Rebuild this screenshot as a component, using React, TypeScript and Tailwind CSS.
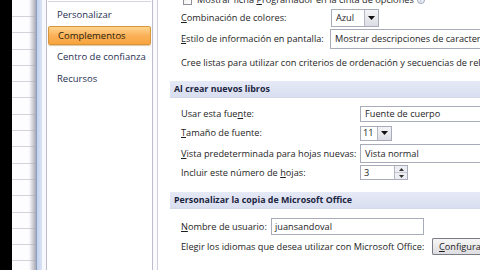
import React from 'react';

const font = "font-['Segoe_UI','Open_Sans','Noto_Sans',sans-serif]";

const U = ({ children }: { children: React.ReactNode }) => (
  <span className="underline underline-offset-[1px] decoration-[0.5px]">{children}</span>
);

const Arrow = () => (
  <svg width="7" height="4" viewBox="0 0 7 4">
    <path d="M0 0h7L3.5 4z" fill="#111" />
  </svg>
);

const DropBtn = () => (
  <div className="flex w-[14px] h-full items-center justify-center border-l border-[#b4b8c4] bg-gradient-to-b from-[#f4f4f8] to-[#dcdde4]">
    <Arrow />
  </div>
);

const Label = ({ children, w }: { children: React.ReactNode; w: string }) => (
  <div className={`${w} shrink-0 whitespace-nowrap`}>{children}</div>
);

const Header = ({ children, mt }: { children: React.ReactNode; mt: string }) => (
  <div
    className={`${mt} ml-[12px] flex h-[17px] shrink-0 items-center border-b border-[#d4d9ea] bg-gradient-to-b from-[#e6e9f6] to-[#d9dff0] pl-[4px] text-[8.9px] font-bold text-[#1b2540]`}
  >
    {children}
  </div>
);

export default function App() {
  const gridRows = Array.from({ length: 18 });
  return (
    <div className={`${font} flex h-[270px] w-[480px] overflow-hidden bg-white text-[9.2px] leading-none text-[#1e1e1e]`}>
      {/* black edge */}
      <div className="w-[12px] shrink-0 bg-black" />

      {/* sheet behind */}
      <div className="relative w-[24px] shrink-0 bg-[#fdfcff]">
        <div className="flex flex-col pt-[0.7px]">
          {gridRows.map((_, i) => (
            <div key={i} className="h-[16.3px] shrink-0 border-b border-[#d3d3dc]" />
          ))}
        </div>
        <div className="absolute inset-y-0 right-0 w-[7px] bg-gradient-to-r from-transparent to-[#a9a9b4]" />
      </div>

      {/* window frame */}
      <div className="w-[6px] shrink-0 border-l border-[#8d9fc4] bg-gradient-to-r from-[#c3d1ec] to-[#d9e3f5]" />
      <div className="w-[4px] shrink-0 bg-[#f7f8fc]" />

      {/* nav */}
      <div className="w-[107px] shrink-0 border-x border-[#bdbccc] bg-white text-[9.5px]">
        <div className="mx-[1px] h-[1px] mt-[1px] bg-[#d6d6e0]" />
        <div className="flex flex-col pt-[2px] text-[#1f2f52]">
          <div className="flex h-[22px] items-center pl-[10px]">Personalizar</div>
          <div className="mx-[1px] flex h-[19px] items-center rounded-[2px] border border-[#d8963a] bg-gradient-to-b from-[#ffd58e] via-[#fbb15a] to-[#f7a43c] pl-[9px] text-[#2a1a05] shadow-[0_1px_1px_rgba(180,110,30,0.4)]">
            Complementos
          </div>
          <div className="flex h-[23px] items-center pl-[10px]">Centro de confianza</div>
          <div className="flex h-[22px] items-center pl-[10px]">Recursos</div>
        </div>
      </div>

      <div className="w-[4px] shrink-0 bg-[#fbfbfd]" />

      {/* content */}
      <div className="flex min-w-0 flex-1 flex-col border-l border-[#cfcfdb] bg-white">
        <div className="-mt-[8px] flex h-[16px] shrink-0 items-center pl-[25px]">
          <div className="h-[9px] w-[9px] shrink-0 border border-[#8e8f99] bg-gradient-to-br from-[#eeeeee] to-white" />
          <div className="ml-[5px] whitespace-nowrap">
            Mostrar ficha <U>P</U>rogramador en la cinta de opciones
          </div>
          <div className="ml-[3px] flex h-[8px] w-[8px] items-center justify-center rounded-full border border-[#9aa3b8] bg-[#eef1f8] text-[6px] text-[#5b6b8c]">
            ?
          </div>
        </div>

        <div className="flex h-[19px] shrink-0 items-center pl-[23px]">
          <Label w="w-[150px]">
            <U>C</U>ombinación de colores:
          </Label>
          <div className="flex h-[18px] w-[48px] items-stretch border border-[#a8acb8] bg-white">
            <div className="flex flex-1 items-center pl-[4px]">Azul</div>
            <DropBtn />
          </div>
        </div>

        <div className="mt-[2px] flex h-[20px] shrink-0 items-center pl-[23px]">
          <Label w="w-[149px]">
            <U>E</U>stilo de información en pantalla:
          </Label>
          <div className="flex h-[20px] flex-1 items-center whitespace-nowrap border border-r-0 border-[#a8acb8] pl-[4px]">
            Mostrar descripciones de características
          </div>
        </div>

        <div className="mt-[4px] flex h-[20px] shrink-0 items-center whitespace-nowrap pl-[23px]">
          Cree listas para utilizar con criterios de ordenación y secuencias de relleno:
        </div>

        <Header mt="mt-[8px]">Al crear nuevos libros</Header>

        <div className="mt-[7px] flex h-[17px] shrink-0 items-center pl-[23px]">
          <Label w="w-[179px]">
            Usar esta fue<U>n</U>te:
          </Label>
          <div className="flex h-[16px] flex-1 items-center whitespace-nowrap border border-r-0 border-[#a8acb8] pl-[4px]">
            Fuente de cuerpo
          </div>
        </div>

        <div className="mt-[2px] flex h-[18px] shrink-0 items-center pl-[23px]">
          <Label w="w-[179px]">
            <U>T</U>amaño de fuente:
          </Label>
          <div className="flex h-[15px] w-[32px] items-stretch border border-[#a8acb8]">
            <div className="flex flex-1 items-center pl-[2px]">11</div>
            <DropBtn />
          </div>
        </div>

        <div className="mt-[2px] flex h-[19px] shrink-0 items-center pl-[23px]">
          <Label w="w-[179px]">
            <U>V</U>ista predeterminada para hojas nuevas:
          </Label>
          <div className="flex h-[19px] flex-1 items-center whitespace-nowrap border border-r-0 border-[#a8acb8] pl-[4px]">
            Vista normal
          </div>
        </div>

        <div className="mt-[2px] flex h-[15px] shrink-0 items-center pl-[23px]">
          <Label w="w-[179px]">
            Incluir este número de <U>h</U>ojas:
          </Label>
          <div className="flex h-[15px] w-[48px] items-stretch border border-[#a8acb8]">
            <div className="flex flex-1 items-center pl-[3px]">3</div>
            <div className="flex w-[13px] flex-col border-l border-[#b4b8c4] bg-[#eceef3]">
              <div className="flex flex-1 items-center justify-center border-b border-[#c4c8d2]">
                <svg width="5" height="3" viewBox="0 0 5 3">
                  <path d="M0 3h5L2.5 0z" fill="#333" />
                </svg>
              </div>
              <div className="flex flex-1 items-center justify-center">
                <svg width="5" height="3" viewBox="0 0 5 3">
                  <path d="M0 0h5L2.5 3z" fill="#333" />
                </svg>
              </div>
            </div>
          </div>
        </div>

        <Header mt="mt-[12px]">Personalizar la copia de Microsoft Office</Header>

        <div className="mt-[9px] flex h-[17px] shrink-0 items-center pl-[23px]">
          <Label w="w-[90px]">
            <U>N</U>ombre de usuario:
          </Label>
          <div className="flex h-[17px] w-[153px] items-center border border-[#a8acb8] pl-[3px]">juansandoval</div>
        </div>

        <div className="mt-[3px] flex h-[17px] shrink-0 items-center pl-[23px]">
          <Label w="w-[251px]">Elegir los idiomas que desea utilizar con Microsoft Office:</Label>
          <div className="flex h-[17px] flex-1 items-center whitespace-nowrap rounded-l-[2px] border border-r-0 border-[#7a7d86] bg-gradient-to-b from-[#f6f6f6] to-[#dedee2] pl-[6px]">
            <U>C</U>onfiguración...
          </div>
        </div>
      </div>
    </div>
  );
}
